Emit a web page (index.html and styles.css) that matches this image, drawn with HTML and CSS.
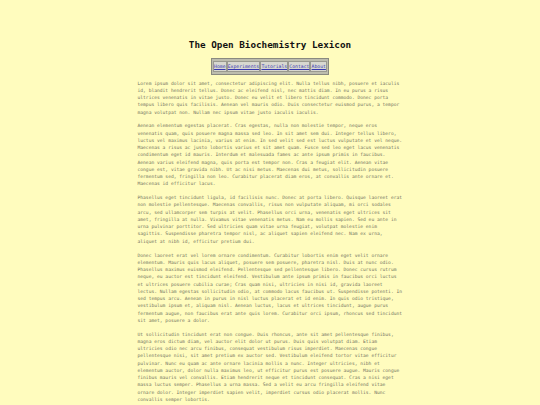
FILE: index.html
```html
<!DOCTYPE html>
<html>
<head>
<meta charset="utf-8">
<title>The Open Biochemistry Lexicon</title>
<link rel="stylesheet" href="styles.css">
</head>
<body>
<div class="page">
  <h1 class="title">The Open Biochemistry Lexicon</h1>
  <nav class="nav">
    <a class="nav-link nav-home" href="#">Home</a><a class="nav-link" href="#">Experiments</a><a class="nav-link" href="#">Tutorials</a><a class="nav-link" href="#">Contact</a><a class="nav-link" href="#">About</a>
  </nav>
  <main class="content">
    <p>Lorem ipsum dolor sit amet, consectetur adipiscing elit. Nulla tellus nibh, posuere et iaculis id, blandit hendrerit tellus. Donec ac eleifend nisl, nec mattis diam. In eu purus a risus ultrices venenatis in vitae justo. Donec eu velit et libero tincidunt commodo. Donec porta tempus libero quis facilisis. Aenean vel mauris odio. Duis consectetur euismod purus, a tempor magna volutpat non. Nullam nec ipsum vitae justo iaculis iaculis.</p>
    <p>Aenean elementum egestas placerat. Cras egestas, nulla non molestie tempor, neque eros venenatis quam, quis posuere magna massa sed leo. In sit amet sem dui. Integer tellus libero, luctus vel maximus lacinia, varius at enim. In sed velit sed est luctus vulputate et vel neque. Maecenas a risus ac justo lobortis varius et sit amet quam. Fusce sed leo eget lacus venenatis condimentum eget id mauris. Interdum et malesuada fames ac ante ipsum primis in faucibus. Aenean varius eleifend magna, quis porta est tempor non. Cras a feugiat elit. Aenean vitae congue est, vitae gravida nibh. Ut ac nisi metus. Maecenas dui metus, sollicitudin posuere fermentum sed, fringilla non leo. Curabitur placerat diam eros, at convallis ante ornare et. Maecenas id efficitur lacus.</p>
    <p>Phasellus eget tincidunt ligula, id facilisis nunc. Donec at porta libero. Quisque laoreet erat non molestie pellentesque. Maecenas convallis, risus non vulputate aliquam, mi orci sodales arcu, sed ullamcorper sem turpis at velit. Phasellus orci urna, venenatis eget ultrices sit amet, fringilla at nulla. Vivamus vitae venenatis metus. Nam eu mollis sapien. Sed eu ante in urna pulvinar porttitor. Sed ultricies quam vitae urna feugiat, volutpat molestie enim sagittis. Suspendisse pharetra tempor nisl, ac aliquet sapien eleifend nec. Nam ex urna, aliquet at nibh id, efficitur pretium dui.</p>
    <p>Donec laoreet erat vel lorem ornare condimentum. Curabitur lobortis enim eget velit ornare elementum. Mauris quis lacus aliquet, posuere sem posuere, pharetra nisl. Duis at nunc odio. Phasellus maximus euismod eleifend. Pellentesque sed pellentesque libero. Donec cursus rutrum neque, eu auctor est tincidunt eleifend. Vestibulum ante ipsum primis in faucibus orci luctus et ultrices posuere cubilia curae; Cras quam nisi, ultricies in nisi id, gravida laoreet lectus. Nullam egestas sollicitudin odio, at commodo lacus faucibus ut. Suspendisse potenti. In sed tempus arcu. Aenean in purus in nisl luctus placerat et id enim. In quis odio tristique, vestibulum ipsum et, aliquam nisl. Aenean luctus, lacus et ultrices tincidunt, augue purus fermentum augue, non faucibus erat ante quis lorem. Curabitur orci ipsum, rhoncus sed tincidunt sit amet, posuere a dolor.</p>
    <p>Ut sollicitudin tincidunt erat non congue. Duis rhoncus, ante sit amet pellentesque finibus, magna eros dictum diam, vel auctor elit dolor ut purus. Duis quis volutpat diam. Etiam ultricies odio nec arcu finibus, consequat vestibulum risus imperdiet. Maecenas congue pellentesque nisi, sit amet pretium ex auctor sed. Vestibulum eleifend tortor vitae efficitur pulvinar. Nunc eu quam ac ante ornare lacinia mollis a nunc. Integer ultricies, nibh et elementum auctor, dolor nulla maximus leo, ut efficitur purus est posuere augue. Mauris congue finibus mauris vel convallis. Etiam hendrerit neque et tincidunt consequat. Cras a nisi eget massa luctus semper. Phasellus a urna massa. Sed a velit eu arcu fringilla eleifend vitae ornare dolor. Integer imperdiet sapien velit, imperdiet cursus odio placerat mollis. Nunc convallis semper lobortis.</p>
  </main>
</div>
</body>
</html>
```

FILE: styles.css
```css
html, body {
  margin: 0;
  padding: 0;
}
body {
  background: #fffcbe;
  font-family: "DejaVu Sans Mono", "Liberation Mono", monospace;
}
.page {
  width: 265px;
  margin: 0 auto;
  padding-top: 37px;
  display: flex;
  flex-direction: column;
  align-items: center;
}
.title {
  margin: 0;
  font-size: 9.3px;
  line-height: 16px;
  font-weight: bold;
  color: #111;
  text-align: center;
}
.nav {
  margin-top: 5px;
  display: flex;
  padding: 1.5px;
  background: #bdbdae;
  border: 1px solid #8a8a80;
}
.nav-link {
  display: block;
  font-size: 4.75px;
  line-height: 9.5px;
  padding: 0 0.1px;
  color: #3838b0;
  text-decoration: underline;
  background: #d8d8d0;
  border: 1px solid #9a9a90;
}
.content {
  margin-top: 5px;
  width: 265px;
}
.content p {
  margin: 0 0 6.6px;
  font-size: 4.63px;
  line-height: 7.25px;
  color: #74745e;
}
```
